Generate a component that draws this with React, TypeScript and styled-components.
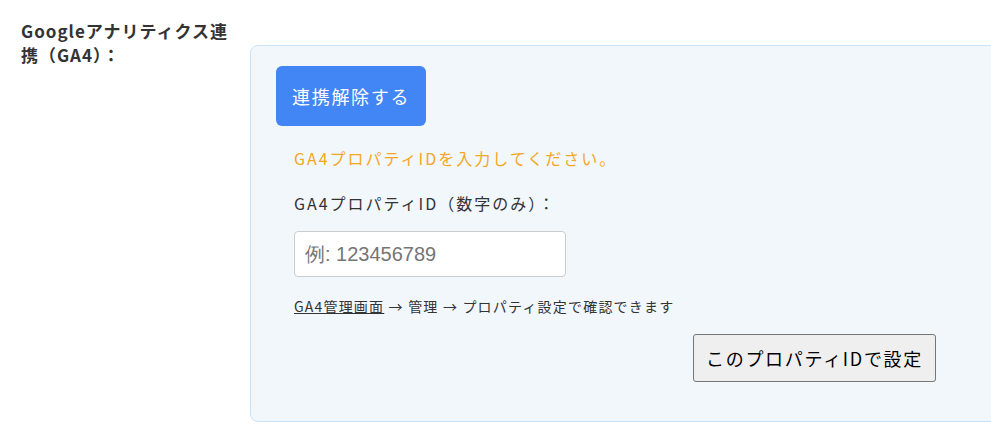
import React from 'react';
import styled, {createGlobalStyle} from 'styled-components';

const GlobalStyle = createGlobalStyle`
  html, body {
    margin: 0;
    padding: 0;
    background: #ffffff;
    overflow: hidden;
  }

  body {
    font-family: "Noto Sans CJK JP", "Noto Sans", sans-serif;
    color: #333333;
  }
`

const Row = styled.div`
  display: flex;
  align-items: flex-start;
  width: 1200px;
  padding: 19px 0 0 21px;
`

const Label = styled.div`
  width: 210px;
  flex-shrink: 0;
  margin-right: 19px;
  font-size: 17px;
  font-weight: bold;
  line-height: 23.5px;
  letter-spacing: 1px;
  color: #333;
`

const Panel = styled.div`
  margin-top: 26px;
  width: 780px;
  height: 335px;
  padding: 20px 25px;
  background: #f2f7fc;
  border: 1px solid #c8e3f8;
  border-radius: 8px;
`

const DisconnectButton = styled.button`
  display: block;
  width: 150px;
  height: 60px;
  padding: 0 0 0 16px;
  border: none;
  border-radius: 6px;
  background: #4285f4;
  color: #fff;
  font-family: "Noto Sans CJK JP", "Noto Sans", sans-serif;
  font-size: 18px;
  letter-spacing: 1.7px;
  white-space: nowrap;
  text-align: left;
`

const Form = styled.div`
  width: 642px;
  padding: 20px 18px 0;
  display: flex;
  flex-direction: column;
`

const Notice = styled.p`
  margin: 0;
  font-size: 16px;
  line-height: 24px;
  letter-spacing: 2px;
  color: #f5a623;
`

const FieldLabel = styled.label`
  margin-top: 21px;
  font-size: 16px;
  line-height: 24px;
  letter-spacing: 2px;
  color: #333;
`

const Input = styled.input`
  margin-top: 16px;
  box-sizing: border-box;
  width: 272px;
  height: 46px;
  padding: 0 10px;
  border: 1px solid #cccccc;
  border-radius: 4px;
  background: #fff;
  font-family: "Liberation Sans", Arial, sans-serif;
  font-size: 20px;

  &::placeholder {
    color: #757575;
  }
`

const Help = styled.p`
  margin: 19px 0 0;
  font-size: 14px;
  line-height: 20px;
  letter-spacing: 1.2px;
  color: #333;

  a {
    color: #333;
    text-decoration: underline;
  }
`

const SaveButton = styled.button`
  align-self: flex-end;
  margin-top: 18px;
  height: 48px;
  padding: 0 12px 0 12px;
  background: #efefef;
  border: 1px solid #767676;
  border-radius: 3px;
  color: #000;
  font-family: "Noto Sans CJK JP", "Noto Sans", sans-serif;
  font-size: 18px;
  letter-spacing: 1.7px;
  white-space: nowrap;
`

const App = () => {
    return (
        <>
            <GlobalStyle/>
            <Row>
                <Label>Googleアナリティクス連携（GA4）：</Label>
                <Panel>
                    <DisconnectButton>連携解除する</DisconnectButton>
                    <Form>
                        <Notice>GA4プロパティIDを入力してください。</Notice>
                        <FieldLabel>GA4プロパティID（数字のみ）：</FieldLabel>
                        <Input type="text" placeholder="例: 123456789"/>
                        <Help>
                            <a href="#">GA4管理画面</a> → 管理 → プロパティ設定で確認できます
                        </Help>
                        <SaveButton>このプロパティIDで設定</SaveButton>
                    </Form>
                </Panel>
            </Row>
        </>
    );
};

export default App;
